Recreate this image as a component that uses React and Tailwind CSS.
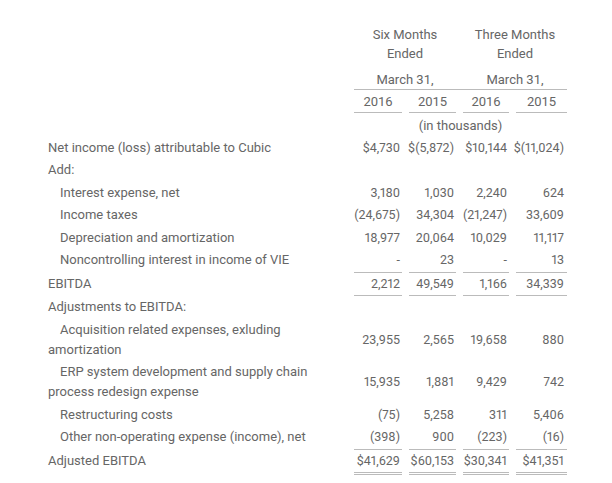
import React from 'react';

const rows = [
  { label: 'Net income (loss) attributable to Cubic', v: ['$4,730', '$(5,872)', '$10,144', '$(11,024)'] },
  { label: 'Add:' },
  { label: 'Interest expense, net', indent: true, v: ['3,180', '1,030', '2,240', '624'] },
  { label: 'Income taxes', indent: true, v: ['(24,675)', '34,304', '(21,247)', '33,609'] },
  { label: 'Depreciation and amortization', indent: true, v: ['18,977', '20,064', '10,029', '11,117'] },
  { label: 'Noncontrolling interest in income of VIE', indent: true, v: ['-', '23', '-', '13'], border: 'single' },
  { label: 'EBITDA', v: ['2,212', '49,549', '1,166', '34,339'], border: 'single' },
  { label: 'Adjustments to EBITDA:' },
  { label: ['Acquisition related expenses, exluding', 'amortization'], indent: true, v: ['23,955', '2,565', '19,658', '880'] },
  { label: ['ERP system development and supply chain', 'process redesign expense'], indent: true, v: ['15,935', '1,881', '9,429', '742'] },
  { label: 'Restructuring costs', indent: true, v: ['(75)', '5,258', '311', '5,406'] },
  { label: 'Other non-operating expense (income), net', indent: true, v: ['(398)', '900', '(223)', '(16)'], border: 'single' },
  { label: 'Adjusted EBITDA', v: ['$41,629', '$60,153', '$30,341', '$41,351'], border: 'double' },
];

const grid = 'grid grid-cols-[299px_48px_47px_46px_51px] gap-x-[7px]';

function Label({ label, indent }) {
  if (Array.isArray(label)) {
    return (
      <div className="whitespace-nowrap">
        <div className={indent ? 'pl-[12px]' : ''}>{label[0]}</div>
        <div>{label[1]}</div>
      </div>
    );
  }
  return <div className={'whitespace-nowrap ' + (indent ? 'pl-[12px]' : '')}>{label}</div>;
}

export default function App() {
  return (
    <div
      className="w-[612px] h-[483px] bg-white text-[#666] text-[13px] pl-[48px] pt-[25px]"
      style={{ fontFamily: 'Roboto, "Liberation Sans", sans-serif' }}
    >
      {/* Header */}
      <div className={grid + ' leading-[19px]'}>
        <div />
        <div className="col-span-2 text-center">Six Months<br />Ended</div>
        <div className="col-span-2 text-center">Three Months<br />Ended</div>
      </div>
      <div className={grid + ' leading-[18px] pt-[8px]'}>
        <div />
        <div className="col-span-4 border-b border-[#bbb] grid grid-cols-[102px_7px_104px]">
          <div className="text-center">March 31,</div>
          <div />
          <div className="text-center">March 31,</div>
        </div>
      </div>
      <div className={grid + ' leading-[20px]'}>
        <div />
        {['2016', '2015', '2016', '2015'].map((y, i) => (
          <div key={i} className="text-center pt-[1.5px] border-b border-[#bbb]">{y}</div>
        ))}
      </div>
      <div className={grid + ' leading-[20px] pt-[3px] pb-[1px]'}>
        <div />
        <div className="col-span-4 text-center">(in thousands)</div>
      </div>

      {/* Body */}
      {rows.map((r, i) => (
        <div key={i} className={grid + ' leading-[20px]'}>
          <div className="py-[1.25px]">
            <Label label={r.label} indent={r.indent} />
          </div>
          {[0, 1, 2, 3].map((j) => (
            <div
              key={j}
              className={
                'flex items-center justify-end py-[1.25px] proportional-nums text-[12.5px] ' +
                (j === 3 ? 'pr-[3px] ' : 'pr-[2px] ') +
                (r.border === 'single'
                  ? 'border-b border-[#bbb]'
                  : r.border === 'double'
                  ? 'border-b-[3px] border-double border-[#bbb]'
                  : '')
              }
            >
              {r.v ? r.v[j] : ''}
            </div>
          ))}
        </div>
      ))}
    </div>
  );
}
